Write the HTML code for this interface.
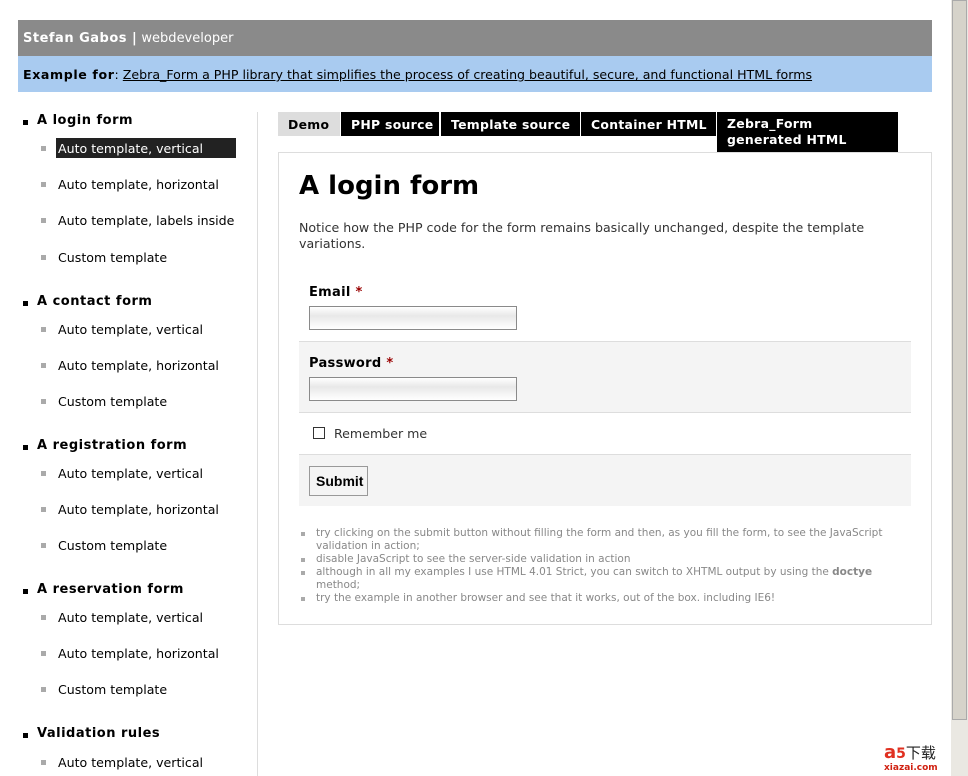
<!DOCTYPE html>
<html><head><meta charset="utf-8"><style>
*{margin:0;padding:0;box-sizing:border-box}
body{width:968px;height:776px;overflow:hidden;background:#fff;font-family:"DejaVu Sans","Liberation Sans",sans-serif;font-size:12.6px;color:#000;position:relative}
.a{position:absolute;white-space:nowrap}
.hd{left:18px;top:20px;width:914px;height:36px;background:#8a8a8a;color:#fff;padding:11px 5px;font-size:13px}
.ex{left:18px;top:56px;width:914px;height:36px;background:#a9cbf0;padding:11px 5px;font-size:12.6px}
.ex a{color:#000;text-decoration:underline}
.h{font-weight:bold;letter-spacing:.5px;font-size:13px}
.sq{position:absolute;width:5px;height:5px;background:#000}
.sq2{position:absolute;width:5px;height:5px;background:#aaa}
.tab{position:absolute;top:112px;height:24px;background:#000;color:#fff;font-weight:bold;padding:5px 0 0 10px;letter-spacing:.3px;font-size:12.4px;white-space:nowrap}
.inp{position:absolute;left:309px;width:208px;height:24px;border:1px solid #8a8a8a;background:linear-gradient(#fff,#e8e8e8 40%,#fff)}
.tip{position:absolute;left:316px;font-size:10.5px;color:#888;line-height:13px}
.tq{position:absolute;left:301px;width:4px;height:4px;background:#aaa}
</style></head><body>
<div class="a hd"><b style="letter-spacing:.5px">Stefan Gabos |</b> webdeveloper</div>
<div class="a ex"><b style="letter-spacing:.6px">Example for</b>: <a>Zebra_Form a PHP library that simplifies the process of creating beautiful, secure, and functional HTML forms</a></div>

<div class="sq" style="left:23px;top:120px"></div><div class="a h" style="left:37px;top:113px">A login form</div>
<div class="a" style="left:56px;top:138px;width:180px;height:20px;background:#222"></div>
<div class="sq2" style="left:41px;top:146px"></div><div class="a" style="left:58px;top:141px;color:#fff">Auto template, vertical</div>
<div class="sq2" style="left:41px;top:182px"></div><div class="a" style="left:58px;top:177px">Auto template, horizontal</div>
<div class="sq2" style="left:41px;top:218px"></div><div class="a" style="left:58px;top:213px">Auto template, labels inside</div>
<div class="sq2" style="left:41px;top:255px"></div><div class="a" style="left:58px;top:250px">Custom template</div>

<div class="sq" style="left:23px;top:301px"></div><div class="a h" style="left:37px;top:294px">A contact form</div>
<div class="sq2" style="left:41px;top:327px"></div><div class="a" style="left:58px;top:322px">Auto template, vertical</div>
<div class="sq2" style="left:41px;top:363px"></div><div class="a" style="left:58px;top:358px">Auto template, horizontal</div>
<div class="sq2" style="left:41px;top:399px"></div><div class="a" style="left:58px;top:394px">Custom template</div>

<div class="sq" style="left:23px;top:445px"></div><div class="a h" style="left:37px;top:438px">A registration form</div>
<div class="sq2" style="left:41px;top:471px"></div><div class="a" style="left:58px;top:466px">Auto template, vertical</div>
<div class="sq2" style="left:41px;top:507px"></div><div class="a" style="left:58px;top:502px">Auto template, horizontal</div>
<div class="sq2" style="left:41px;top:543px"></div><div class="a" style="left:58px;top:538px">Custom template</div>

<div class="sq" style="left:23px;top:589px"></div><div class="a h" style="left:37px;top:582px">A reservation form</div>
<div class="sq2" style="left:41px;top:615px"></div><div class="a" style="left:58px;top:610px">Auto template, vertical</div>
<div class="sq2" style="left:41px;top:651px"></div><div class="a" style="left:58px;top:646px">Auto template, horizontal</div>
<div class="sq2" style="left:41px;top:687px"></div><div class="a" style="left:58px;top:682px">Custom template</div>

<div class="sq" style="left:23px;top:733px"></div><div class="a h" style="left:37px;top:726px">Validation rules</div>
<div class="sq2" style="left:41px;top:760px"></div><div class="a" style="left:58px;top:755px">Auto template, vertical</div>

<div class="a" style="left:257px;top:112px;width:1px;height:664px;background:#ddd"></div>

<div class="tab" style="left:278px;width:62px;background:#ddd;color:#000">Demo</div>
<div class="tab" style="left:341px;width:98px">PHP source</div>
<div class="tab" style="left:441px;width:139px">Template source</div>
<div class="tab" style="left:581px;width:135px">Container HTML</div>
<div class="tab" style="left:717px;width:181px;height:40px;line-height:16px;white-space:normal;padding:4px 20px 0 10px">Zebra_Form generated HTML</div>

<div class="a" style="left:278px;top:152px;width:654px;height:473px;border:1px solid #ddd"></div>
<div class="a" style="left:299px;top:171px;font-size:26px;font-weight:bold">A login form</div>
<div class="a" style="left:299px;top:220px;width:600px;white-space:normal;color:#333;line-height:16px;font-size:12.6px">Notice how the PHP code for the form remains basically unchanged, despite the template variations.</div>

<div class="a h" style="left:309px;top:285px;letter-spacing:.3px">Email <span style="color:#900">*</span></div>
<div class="inp" style="top:306px"></div>
<div class="a" style="left:299px;top:341px;width:612px;height:72px;background:#f4f4f4;border-top:1px solid #ddd;border-bottom:1px solid #ddd"></div>
<div class="a h" style="left:309px;top:356px;letter-spacing:.3px">Password <span style="color:#900">*</span></div>
<div class="inp" style="top:377px"></div>
<div class="a" style="left:313px;top:427px;width:12px;height:12px;border:1px solid #333;background:#fff"></div>
<div class="a" style="left:334px;top:426px;color:#333">Remember me</div>
<div class="a" style="left:299px;top:454px;width:612px;height:52px;background:#f4f4f4;border-top:1px solid #ddd"></div>
<div class="a" style="left:309px;top:466px;width:59px;height:30px;border:1px solid #999;background:#f4f4f4;font-family:'Liberation Sans',sans-serif;font-weight:bold;font-size:14px;padding:6px 0 0 6px">Submit</div>

<div class="tq" style="top:532px"></div><div class="tip" style="top:527px;width:590px;white-space:normal">try clicking on the submit button without filling the form and then, as you fill the form, to see the JavaScript validation in action;</div>
<div class="tq" style="top:558px"></div><div class="tip" style="top:553px">disable JavaScript to see the server-side validation in action</div>
<div class="tq" style="top:571px"></div><div class="tip" style="top:566px;width:590px;white-space:normal">although in all my examples I use HTML 4.01 Strict, you can switch to XHTML output by using the <b>doctye</b> method;</div>
<div class="tq" style="top:597px"></div><div class="tip" style="top:592px">try the example in another browser and see that it works, out of the box. including IE6!</div>

<div class="a" style="left:951px;top:0;width:17px;height:776px;background:#eae8e2"></div>
<div class="a" style="left:952px;top:0;width:15px;height:720px;background:#d6d3ca;border:1px solid #aaa"></div>
<div class="a" style="left:884px;top:742px;color:#e03020;font-weight:bold;font-size:18px">a<span style="font-size:14px">5</span><span style="color:#222;font-weight:normal;font-size:15px;font-family:'Noto Sans CJK SC',sans-serif">下载</span></div>
<div class="a" style="left:884px;top:763px;font-size:9px;color:#d02010;font-weight:bold">xiazai.com</div>
</body></html>
